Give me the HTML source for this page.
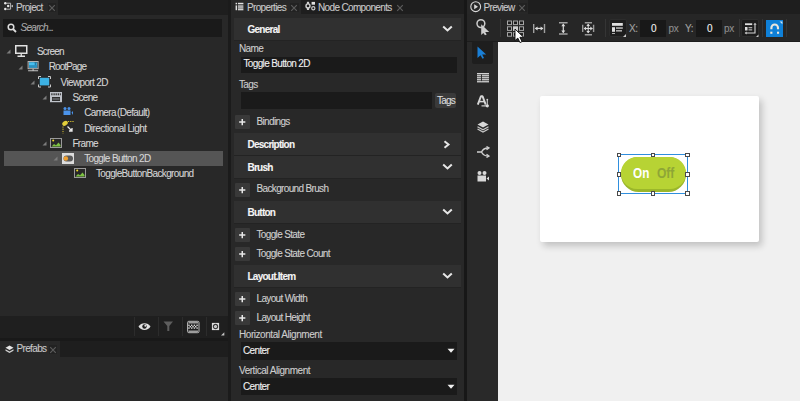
<!DOCTYPE html><html><head><meta charset="utf-8"><style>
html,body{margin:0;padding:0;width:800px;height:401px;overflow:hidden;background:#1e1e1e;position:relative}
body>div,body>svg{position:absolute}
.t{white-space:pre;font-family:"Liberation Sans",sans-serif;-webkit-text-stroke:0.1px currentColor}
</style></head><body>
<div style="left:0px;top:0px;width:58px;height:15px;background:#282828;"></div>
<div style="left:0px;top:15px;width:228px;height:301px;background:#282828;"></div>
<svg style="position:absolute;left:0px;top:0px;" width="16" height="14" viewBox="0 0 16 14"><g fill="#e6e6e6"><circle cx="5.3" cy="3.2" r="1.25"/><circle cx="8.2" cy="6.1" r="1.25"/><circle cx="5.3" cy="9.1" r="1.25"/></g><path d="M6.6 3.2H10.6V9.2H6.6" stroke="#c6c6c6" stroke-width="0.9" fill="none"/><path d="M11 6.1L12.9 4.8V7.4z" fill="#cfcfcf"/></svg>
<div class="t" style="left:16px;top:2px;font-size:10px;line-height:11px;color:#c9c9c9;font-weight:normal;letter-spacing:-0.65px;">Project</div>
<div style="left:48px;top:3px;width:8px;height:9px;background:#222222;"></div>
<svg style="position:absolute;left:48px;top:3.5px;" width="8" height="8" viewBox="0 0 8 8"><path d="M1.2 1.2L6.8 6.8M6.8 1.2L1.2 6.8" stroke="#5c5c5c" stroke-width="1.2"/></svg>
<div style="left:3px;top:19px;width:219px;height:18px;background:#1a1a1a;"></div>
<svg style="position:absolute;left:7px;top:23px;" width="10" height="10" viewBox="0 0 10 10"><circle cx="4" cy="4" r="2.8" stroke="#ddd" stroke-width="1.5" fill="none"/><path d="M6 6l3 3" stroke="#ddd" stroke-width="1.8"/></svg>
<div class="t" style="left:20.5px;top:22px;font-size:10px;line-height:11px;color:#a9a9a9;font-weight:normal;letter-spacing:-0.7px;font-style:italic;">Search<span style="letter-spacing:-1.1px">...</span></div>
<div style="left:4px;top:151px;width:219px;height:14.5px;background:#555555;"></div>
<svg style="position:absolute;left:6.199999999999999px;top:49.25px;" width="5" height="5" viewBox="0 0 5 5"><path d="M0.5 4.5H4.5V0.5Z" fill="#7c7c7c"/></svg>
<svg style="position:absolute;left:15.0px;top:45.25px;" width="13" height="12" viewBox="0 0 13 12"><rect x="0.75" y="0.75" width="11" height="7.5" fill="none" stroke="#e2e2e2" stroke-width="1.5"/><path d="M6.25 8.5v2.5M2.5 11.25h7.5" stroke="#e2e2e2" stroke-width="1.3"/></svg>
<div class="t" style="left:37.0px;top:46px;font-size:10px;line-height:11px;color:#d4d4d4;font-weight:normal;letter-spacing:-0.8px;">Screen</div>
<svg style="position:absolute;left:18.0px;top:64.5px;" width="5" height="5" viewBox="0 0 5 5"><path d="M0.5 4.5H4.5V0.5Z" fill="#7c7c7c"/></svg>
<svg style="position:absolute;left:27px;top:60px;" width="13" height="12" viewBox="0 0 13 12"><rect x="1.1" y="1.5" width="10" height="7.2" fill="#3a3a3a" stroke="#b4b4b4" stroke-width="1"/><rect x="2" y="2.4" width="8.2" height="5.4" fill="#35a9dc"/><rect x="2" y="2.4" width="5.5" height="2.6" fill="#48c0f0"/><rect x="7.9" y="2.4" width="0.8" height="2.8" fill="#1d6e96"/><rect x="2" y="5.7" width="8.2" height="0.7" fill="#1d6e96"/><path d="M6.1 8.7v1.6M1.1 10.8h10" stroke="#c4c4c4" stroke-width="1.1"/></svg>
<div class="t" style="left:48.8px;top:61px;font-size:10px;line-height:11px;color:#d4d4d4;font-weight:normal;letter-spacing:-0.9px;">RootPage</div>
<svg style="position:absolute;left:29.799999999999997px;top:79.75px;" width="5" height="5" viewBox="0 0 5 5"><path d="M0.5 4.5H4.5V0.5Z" fill="#7c7c7c"/></svg>
<svg style="position:absolute;left:38.1px;top:76.25px;" width="13" height="12" viewBox="0 0 13 12"><rect x="1.8" y="1.8" width="9.4" height="7.6" fill="#3cb1e3"/><path d="M0.5 3V0.5H3M10 0.5h2.5V3M12.5 8.5V11H10M3 11H0.5V8.5" stroke="#c9c9c9" stroke-width="1" fill="none"/></svg>
<div class="t" style="left:60.6px;top:77px;font-size:10px;line-height:11px;color:#d4d4d4;font-weight:normal;letter-spacing:-0.65px;">Viewport 2D</div>
<svg style="position:absolute;left:41.60000000000001px;top:95.0px;" width="5" height="5" viewBox="0 0 5 5"><path d="M0.5 4.5H4.5V0.5Z" fill="#7c7c7c"/></svg>
<svg style="position:absolute;left:50px;top:92px;" width="13" height="12" viewBox="0 0 13 12"><rect x="0" y="0" width="12" height="10.2" fill="#bfc3ca"/><g fill="#2a2a2a"><rect x="1.3" y="1.3" width="1.2" height="2.2"/><rect x="3.5" y="1.3" width="1.2" height="2.2"/><rect x="5.6" y="1.3" width="1.2" height="2.2"/><rect x="7.7" y="1.3" width="1.2" height="2.2"/><rect x="9.8" y="1.3" width="1" height="2.2"/></g><rect x="1" y="3.5" width="10" height="0.8" fill="#bfc3ca"/><rect x="2" y="5" width="8" height="4" fill="#2e2e2e"/><rect x="2.5" y="6.4" width="7" height="1.2" fill="#7a7d82"/></svg>
<div class="t" style="left:72.4px;top:92px;font-size:10px;line-height:11px;color:#d4d4d4;font-weight:normal;letter-spacing:-0.65px;">Scene</div>
<svg style="position:absolute;left:62.7px;top:107.25px;" width="12" height="10" viewBox="0 0 12 10"><g fill="#4b93ea"><circle cx="2" cy="1.6" r="1.5"/><circle cx="6" cy="1.6" r="1.5"/><rect x="0.5" y="3.5" width="7" height="4.5"/><path d="M8.5 5.5L10 4v4z"/></g></svg>
<div class="t" style="left:84.2px;top:107px;font-size:10px;line-height:11px;color:#d4d4d4;font-weight:normal;letter-spacing:-0.65px;">Camera<span style="letter-spacing:-1.6px"> </span>(Default)</div>
<svg style="position:absolute;left:62.2px;top:120.3px;" width="13" height="14" viewBox="0 0 13 14"><ellipse cx="3" cy="3.3" rx="3" ry="2.2" transform="rotate(-35 3 3.3)" fill="#e3cf3a"/><path d="M6 1.5h6M1 6.5v7" stroke="#d8c030" stroke-width="1" stroke-dasharray="1.2 1"/><path d="M5.5 6.5l4.5 4.5M10 8v3h-3" stroke="#e8e8e8" stroke-width="1.3" fill="none"/></svg>
<div class="t" style="left:84.2px;top:123px;font-size:10px;line-height:11px;color:#d4d4d4;font-weight:normal;letter-spacing:-0.55px;">Directional Light</div>
<svg style="position:absolute;left:41.60000000000001px;top:140.75px;" width="5" height="5" viewBox="0 0 5 5"><path d="M0.5 4.5H4.5V0.5Z" fill="#7c7c7c"/></svg>
<svg style="position:absolute;left:50.400000000000006px;top:137.75px;" width="13" height="11" viewBox="0 0 13 11"><rect x="0.5" y="0.5" width="11" height="9" fill="none" stroke="#9a9a9a" stroke-width="1"/><circle cx="3.2" cy="2.6" r="1" fill="#f2df2a"/><path d="M1.5 8.5L4 6l2 1.3L8.5 4.5L10.5 7v1.5z" fill="#7dc142"/></svg>
<div class="t" style="left:72.4px;top:138px;font-size:10px;line-height:11px;color:#d4d4d4;font-weight:normal;letter-spacing:-0.65px;">Frame</div>
<svg style="position:absolute;left:53.400000000000006px;top:156.0px;" width="5" height="5" viewBox="0 0 5 5"><path d="M0.5 4.5H4.5V0.5Z" fill="#7c7c7c"/></svg>
<svg style="position:absolute;left:62.2px;top:152.5px;" width="12" height="12" viewBox="0 0 12 12"><rect x="0" y="0" width="12" height="11" fill="#dcdcdc"/><rect x="1.5" y="2.5" width="9.5" height="6" rx="3" fill="#5a5a5a"/><circle cx="3.8" cy="5.5" r="2.3" fill="#f0a030"/></svg>
<div class="t" style="left:84.2px;top:153px;font-size:10px;line-height:11px;color:#d4d4d4;font-weight:normal;letter-spacing:-0.65px;">Toggle Button 2D</div>
<svg style="position:absolute;left:74.0px;top:168.25px;" width="13" height="11" viewBox="0 0 13 11"><rect x="0.5" y="0.5" width="11" height="9" fill="none" stroke="#9a9a9a" stroke-width="1"/><circle cx="3.2" cy="2.6" r="1" fill="#f2df2a"/><path d="M1.5 8.5L4 6l2 1.3L8.5 4.5L10.5 7v1.5z" fill="#7dc142"/></svg>
<div class="t" style="left:96.0px;top:168px;font-size:10px;line-height:11px;color:#d4d4d4;font-weight:normal;letter-spacing:-0.65px;">ToggleButtonBackground</div>
<div style="left:0px;top:316px;width:227px;height:21.5px;background:#1f1f1f;"></div>
<div style="left:0px;top:337.5px;width:228px;height:3.5px;background:#191919;"></div>
<div style="left:134px;top:317px;width:1px;height:19px;background:#2c2c2c;"></div>
<div style="left:158px;top:317px;width:1px;height:19px;background:#2c2c2c;"></div>
<div style="left:182px;top:317px;width:1px;height:19px;background:#2c2c2c;"></div>
<div style="left:206px;top:317px;width:1px;height:19px;background:#2c2c2c;"></div>
<svg style="position:absolute;left:138px;top:322px;" width="13" height="9" viewBox="0 0 13 9"><path d="M0.5 4.5C3 0 10 0 12.5 4.5C10 9 3 9 0.5 4.5z" fill="#e0e0e0"/><circle cx="6.5" cy="4.5" r="2.2" fill="#1d1d1d"/><circle cx="7.3" cy="3.8" r="1" fill="#e0e0e0"/></svg>
<svg style="position:absolute;left:163px;top:321px;" width="11" height="10" viewBox="0 0 11 10"><path d="M0.5 0.5h9.5L6.3 5v5H4.3V5z" fill="#5e5e5e"/></svg>
<svg style="position:absolute;left:186px;top:320px;" width="14" height="14" viewBox="0 0 14 14"><rect x="1.6" y="1.3" width="11.4" height="11.4" rx="1.2" fill="#1d1d1d" stroke="#bdbdbd" stroke-width="1"/><rect x="2.5" y="2.2" width="9.6" height="1.2" fill="#bdbdbd"/><rect x="2.5" y="10.6" width="9.6" height="1.2" fill="#bdbdbd"/><g fill="#d8d8d8"><rect x="2.3" y="4.6" width="1.4" height="1.4"/><rect x="5" y="4.6" width="1.4" height="1.4"/><rect x="7.7" y="4.6" width="1.4" height="1.4"/><rect x="10.4" y="4.6" width="1.4" height="1.4"/><rect x="3.6" y="6" width="1.4" height="1.4"/><rect x="6.3" y="6" width="1.4" height="1.4"/><rect x="9" y="6" width="1.4" height="1.4"/><rect x="2.3" y="7.4" width="1.4" height="1.4"/><rect x="5" y="7.4" width="1.4" height="1.4"/><rect x="7.7" y="7.4" width="1.4" height="1.4"/><rect x="10.4" y="7.4" width="1.4" height="1.4"/></g></svg>
<svg style="position:absolute;left:211px;top:322px;" width="9" height="9" viewBox="0 0 9 9"><rect x="0.9" y="0.9" width="7.2" height="7.2" fill="#dedede"/><circle cx="4.5" cy="4.5" r="2.1" fill="none" stroke="#3a3a3a" stroke-width="1.2"/><circle cx="4.5" cy="4.5" r="0.7" fill="#bbb"/></svg>
<svg style="position:absolute;left:221px;top:332px;" width="4" height="4" viewBox="0 0 4 4"><path d="M0 3.5H3.3V0.2z" fill="#c4c4c4"/></svg>
<div style="left:0px;top:341px;width:60px;height:16px;background:#282828;"></div>
<div style="left:0px;top:357px;width:228px;height:44px;background:#282828;"></div>
<svg style="position:absolute;left:5px;top:344.8px;" width="9" height="9" viewBox="0 0 9 9"><path d="M4.5 0.5L8.5 2.8L4.5 5L0.5 2.8z" fill="#e6e6e6"/><path d="M0.5 4.3L4.5 6.5L8.5 4.3V5.8L4.5 8L0.5 5.8z" fill="#d0d0d0"/></svg>
<div class="t" style="left:16.5px;top:343px;font-size:10px;line-height:11px;color:#c9c9c9;font-weight:normal;letter-spacing:-0.65px;">Prefabs</div>
<div style="left:49px;top:345px;width:8px;height:9px;background:#222222;"></div>
<svg style="position:absolute;left:49px;top:345.5px;" width="8" height="8" viewBox="0 0 8 8"><path d="M1.2 1.2L6.8 6.8M6.8 1.2L1.2 6.8" stroke="#5c5c5c" stroke-width="1.2"/></svg>
<div style="left:228px;top:0px;width:3px;height:401px;background:#1b1b1b;"></div>
<div style="left:231px;top:0px;width:70px;height:14px;background:#282828;"></div>
<div style="left:231px;top:14px;width:233px;height:387px;background:#282828;"></div>
<svg style="position:absolute;left:235px;top:2px;" width="9" height="9" viewBox="0 0 9 9"><g fill="#e0e0e0"><rect x="0.6" y="0.8" width="1.5" height="1.5"/><rect x="0.6" y="3.4" width="1.5" height="4.8"/><rect x="3" y="0.8" width="5.4" height="1.5"/><rect x="3" y="3.4" width="5.4" height="1.3"/><rect x="3" y="5.3" width="5.4" height="1.3"/><rect x="3" y="7.1" width="5.4" height="1.2"/></g></svg>
<div class="t" style="left:247px;top:2px;font-size:10px;line-height:11px;color:#c9c9c9;font-weight:normal;letter-spacing:-0.65px;">Properties</div>
<div style="left:290px;top:3px;width:8.5px;height:9px;background:#222222;"></div>
<svg style="position:absolute;left:290.2px;top:3.5px;" width="8" height="8" viewBox="0 0 8 8"><path d="M1.2 1.2L6.8 6.8M6.8 1.2L1.2 6.8" stroke="#5c5c5c" stroke-width="1.2"/></svg>
<svg style="position:absolute;left:300px;top:0px;" width="20" height="14" viewBox="0 0 20 14"><circle cx="8" cy="5.9" r="2" fill="none" stroke="#d0d0d0" stroke-width="1.4"/><rect x="6.9" y="1.8" width="2.2" height="2.3" fill="#d0d0d0"/><rect x="6.9" y="7.6" width="2.2" height="2.4" fill="#d0d0d0"/><rect x="11.6" y="1.9" width="3.4" height="2.8" fill="#e0e0e0"/><circle cx="13.3" cy="8.2" r="1.6" fill="none" stroke="#c8c8c8" stroke-width="1.2"/></svg>
<div class="t" style="left:318px;top:2px;font-size:10px;line-height:11px;color:#c9c9c9;font-weight:normal;letter-spacing:-0.65px;">Node Components</div>
<svg style="position:absolute;left:396px;top:3.5px;" width="8" height="8" viewBox="0 0 8 8"><path d="M1.2 1.2L6.8 6.8M6.8 1.2L1.2 6.8" stroke="#5c5c5c" stroke-width="1.2"/></svg>
<div style="left:234px;top:18px;width:227px;height:22px;background:#303030;"></div>
<div style="left:234px;top:40px;width:227px;height:1px;background:#232323;"></div>
<div class="t" style="left:247.5px;top:24px;font-size:10px;line-height:11px;color:#f4f4f4;font-weight:bold;letter-spacing:-0.75px;">General</div>
<svg style="position:absolute;left:442px;top:25px;" width="11" height="8" viewBox="0 0 11 8"><path d="M1.2 1.5L5.5 5.5L9.8 1.5" stroke="#e6e6e6" stroke-width="2" fill="none"/></svg>
<div class="t" style="left:239px;top:43px;font-size:10px;line-height:11px;color:#cdcdcd;font-weight:normal;letter-spacing:-0.65px;">Name</div>
<div style="left:241px;top:57px;width:216px;height:16px;background:#1a1a1a;"></div>
<div class="t" style="left:243.5px;top:58px;font-size:10px;line-height:11px;color:#f0f0f0;font-weight:normal;letter-spacing:-0.65px;">Toggle Button 2D</div>
<div class="t" style="left:239px;top:79px;font-size:10px;line-height:11px;color:#cdcdcd;font-weight:normal;letter-spacing:-0.65px;">Tags</div>
<div style="left:241px;top:92px;width:191px;height:16.5px;background:#1a1a1a;"></div>
<div style="left:435px;top:93px;width:21px;height:15px;background:#3a3a3a;border-radius:2px"></div>
<div class="t" style="left:437px;top:95px;font-size:10px;line-height:11px;color:#dcdcdc;font-weight:normal;letter-spacing:-0.8px;">Tags</div>
<div style="left:235px;top:115px;width:14.5px;height:14px;background:#393939;border-radius:1px"></div>
<svg style="position:absolute;left:235px;top:115px;" width="14" height="14" viewBox="0 0 14 14"><path d="M7.25 4v6.2M4.15 7.1h6.2" stroke="#e8e8e8" stroke-width="1.5"/></svg>
<div class="t" style="left:256.5px;top:116px;font-size:10px;line-height:11px;color:#cfcfcf;font-weight:normal;letter-spacing:-0.65px;">Bindings</div>
<div style="left:234px;top:133px;width:227px;height:22px;background:#303030;"></div>
<div style="left:234px;top:155px;width:227px;height:1px;background:#232323;"></div>
<div class="t" style="left:247.5px;top:139px;font-size:10px;line-height:11px;color:#f4f4f4;font-weight:bold;letter-spacing:-0.75px;">Description</div>
<svg style="position:absolute;left:443px;top:140px;" width="8" height="10" viewBox="0 0 8 10"><path d="M1.5 1.2L5.5 4.5L1.5 7.8" stroke="#e6e6e6" stroke-width="2" fill="none"/></svg>
<div style="left:234px;top:156px;width:227px;height:22px;background:#303030;"></div>
<div style="left:234px;top:178px;width:227px;height:1px;background:#232323;"></div>
<div class="t" style="left:247.5px;top:162px;font-size:10px;line-height:11px;color:#f4f4f4;font-weight:bold;letter-spacing:-0.75px;">Brush</div>
<svg style="position:absolute;left:442px;top:163px;" width="11" height="8" viewBox="0 0 11 8"><path d="M1.2 1.5L5.5 5.5L9.8 1.5" stroke="#e6e6e6" stroke-width="2" fill="none"/></svg>
<div style="left:235px;top:182.5px;width:14.5px;height:14.0px;background:#393939;border-radius:1px"></div>
<svg style="position:absolute;left:235px;top:182.5px;" width="14" height="14" viewBox="0 0 14 14"><path d="M7.25 4v6.2M4.15 7.1h6.2" stroke="#e8e8e8" stroke-width="1.5"/></svg>
<div class="t" style="left:256.5px;top:183px;font-size:10px;line-height:11px;color:#cfcfcf;font-weight:normal;letter-spacing:-0.65px;">Background Brush</div>
<div style="left:234px;top:201px;width:227px;height:22px;background:#303030;"></div>
<div style="left:234px;top:223px;width:227px;height:1px;background:#232323;"></div>
<div class="t" style="left:247.5px;top:207px;font-size:10px;line-height:11px;color:#f4f4f4;font-weight:bold;letter-spacing:-0.75px;">Button</div>
<svg style="position:absolute;left:442px;top:208px;" width="11" height="8" viewBox="0 0 11 8"><path d="M1.2 1.5L5.5 5.5L9.8 1.5" stroke="#e6e6e6" stroke-width="2" fill="none"/></svg>
<div style="left:235px;top:227.5px;width:14.5px;height:14.0px;background:#393939;border-radius:1px"></div>
<svg style="position:absolute;left:235px;top:227.5px;" width="14" height="14" viewBox="0 0 14 14"><path d="M7.25 4v6.2M4.15 7.1h6.2" stroke="#e8e8e8" stroke-width="1.5"/></svg>
<div class="t" style="left:256.5px;top:229px;font-size:10px;line-height:11px;color:#cfcfcf;font-weight:normal;letter-spacing:-0.65px;">Toggle State</div>
<div style="left:235px;top:246.8px;width:14.5px;height:14.0px;background:#393939;border-radius:1px"></div>
<svg style="position:absolute;left:235px;top:246.8px;" width="14" height="14" viewBox="0 0 14 14"><path d="M7.25 4v6.2M4.15 7.1h6.2" stroke="#e8e8e8" stroke-width="1.5"/></svg>
<div class="t" style="left:256.5px;top:248px;font-size:10px;line-height:11px;color:#cfcfcf;font-weight:normal;letter-spacing:-0.65px;">Toggle State Count</div>
<div style="left:234px;top:265px;width:227px;height:22px;background:#303030;"></div>
<div style="left:234px;top:287px;width:227px;height:1px;background:#232323;"></div>
<div class="t" style="left:247.5px;top:271px;font-size:10px;line-height:11px;color:#f4f4f4;font-weight:bold;letter-spacing:-0.75px;">Layout.Item</div>
<svg style="position:absolute;left:442px;top:272px;" width="11" height="8" viewBox="0 0 11 8"><path d="M1.2 1.5L5.5 5.5L9.8 1.5" stroke="#e6e6e6" stroke-width="2" fill="none"/></svg>
<div style="left:235px;top:292px;width:14.5px;height:14px;background:#393939;border-radius:1px"></div>
<svg style="position:absolute;left:235px;top:292px;" width="14" height="14" viewBox="0 0 14 14"><path d="M7.25 4v6.2M4.15 7.1h6.2" stroke="#e8e8e8" stroke-width="1.5"/></svg>
<div class="t" style="left:256.5px;top:293px;font-size:10px;line-height:11px;color:#cfcfcf;font-weight:normal;letter-spacing:-0.65px;">Layout Width</div>
<div style="left:235px;top:311px;width:14.5px;height:14px;background:#393939;border-radius:1px"></div>
<svg style="position:absolute;left:235px;top:311px;" width="14" height="14" viewBox="0 0 14 14"><path d="M7.25 4v6.2M4.15 7.1h6.2" stroke="#e8e8e8" stroke-width="1.5"/></svg>
<div class="t" style="left:256.5px;top:312px;font-size:10px;line-height:11px;color:#cfcfcf;font-weight:normal;letter-spacing:-0.65px;">Layout Height</div>
<div class="t" style="left:239px;top:329px;font-size:10px;line-height:11px;color:#cdcdcd;font-weight:normal;letter-spacing:-0.45px;">Horizontal Alignment</div>
<div style="left:241px;top:342px;width:216px;height:17.5px;background:#1a1a1a;"></div>
<div class="t" style="left:243px;top:345px;font-size:10px;line-height:11px;color:#f0f0f0;font-weight:normal;letter-spacing:-0.65px;">Center</div>
<svg style="position:absolute;left:447px;top:348px;" width="8" height="6" viewBox="0 0 8 6"><path d="M0.5 0.8H7.5L4 4.8z" fill="#f0f0f0"/></svg>
<div class="t" style="left:239px;top:365px;font-size:10px;line-height:11px;color:#cdcdcd;font-weight:normal;letter-spacing:-0.47px;">Vertical Alignment</div>
<div style="left:241px;top:378px;width:216px;height:17px;background:#1a1a1a;"></div>
<div class="t" style="left:243px;top:381px;font-size:10px;line-height:11px;color:#f0f0f0;font-weight:normal;letter-spacing:-0.65px;">Center</div>
<svg style="position:absolute;left:447px;top:384px;" width="8" height="6" viewBox="0 0 8 6"><path d="M0.5 0.8H7.5L4 4.8z" fill="#f0f0f0"/></svg>
<div style="left:464px;top:0px;width:3px;height:401px;background:#171717;"></div>
<div style="left:467px;top:0px;width:61px;height:14px;background:#272727;"></div>
<svg style="position:absolute;left:470px;top:1px;" width="12" height="12" viewBox="0 0 12 12"><circle cx="5.7" cy="5.7" r="4.9" fill="none" stroke="#d8d8d8" stroke-width="1.1"/><path d="M4.2 3.2L8 5.7L4.2 8.2z" fill="#d8d8d8"/></svg>
<div class="t" style="left:483.5px;top:2px;font-size:10px;line-height:11px;color:#c9c9c9;font-weight:normal;letter-spacing:-0.65px;">Preview</div>
<div style="left:518px;top:3px;width:8.5px;height:9px;background:#222222;"></div>
<svg style="position:absolute;left:518.2px;top:3.5px;" width="8" height="8" viewBox="0 0 8 8"><path d="M1.2 1.2L6.8 6.8M6.8 1.2L1.2 6.8" stroke="#5c5c5c" stroke-width="1.2"/></svg>
<div style="left:467px;top:14px;width:333px;height:27px;background:#262626;"></div>
<div style="left:467px;top:40.5px;width:333px;height:1.5px;background:#1c1c1c;"></div>
<div style="left:467px;top:42px;width:31px;height:359px;background:#292929;"></div>
<div style="left:498px;top:42px;width:302px;height:359px;background:#f0f0f0;"></div>
<div style="left:500px;top:19px;width:1px;height:18px;background:#353535;"></div>
<div style="left:605px;top:19px;width:1px;height:18px;background:#353535;"></div>
<div style="left:738.5px;top:19px;width:1.0px;height:18px;background:#353535;"></div>
<div style="left:762px;top:19px;width:1px;height:18px;background:#353535;"></div>
<div style="left:785.5px;top:19px;width:1.0px;height:18px;background:#353535;"></div>
<svg style="position:absolute;left:470px;top:14px;" width="30" height="26" viewBox="0 0 30 26"><circle cx="10.9" cy="9.6" r="3.9" fill="none" stroke="#cdcdcd" stroke-width="1.5"/><path d="M11.2 10.2V21L13.3 19L15 21.2L16.7 20.4L15.2 18H19.2z" fill="#cdcdcd"/></svg>
<svg style="position:absolute;left:506px;top:20px;" width="20" height="18" viewBox="0 0 20 18"><rect x="1" y="0.5" width="5" height="4.6" fill="#a6a6a6"/><rect x="2" y="1.5" width="3" height="2.6" fill="#1d1d1d"/><rect x="7" y="0.5" width="5" height="4.6" fill="#a6a6a6"/><rect x="8" y="1.5" width="3" height="2.6" fill="#1d1d1d"/><rect x="13" y="0.5" width="5" height="4.6" fill="#a6a6a6"/><rect x="14" y="1.5" width="3" height="2.6" fill="#1d1d1d"/><rect x="1" y="6.3" width="5" height="4.6" fill="#a6a6a6"/><rect x="2" y="7.3" width="3" height="2.6" fill="#1d1d1d"/><rect x="7" y="6.3" width="5" height="4.6" fill="#cfcfcf"/><rect x="13" y="6.3" width="5" height="4.6" fill="#a6a6a6"/><rect x="14" y="7.3" width="3" height="2.6" fill="#1d1d1d"/><rect x="1" y="12.1" width="5" height="4.6" fill="#a6a6a6"/><rect x="2" y="13.1" width="3" height="2.6" fill="#1d1d1d"/><rect x="7" y="12.1" width="5" height="4.6" fill="#a6a6a6"/><rect x="8" y="13.1" width="3" height="2.6" fill="#1d1d1d"/><rect x="13" y="12.1" width="5" height="4.6" fill="#a6a6a6"/><rect x="14" y="13.1" width="3" height="2.6" fill="#1d1d1d"/></svg>
<svg style="position:absolute;left:513px;top:28px;" width="12" height="16" viewBox="0 0 12 16"><path d="M2 1V12.6L4.8 10.1L7 14.6L9 13.6L6.9 9.3H10.6z" fill="#fff" stroke="#0c0c0c" stroke-width="0.9" stroke-linejoin="round"/></svg>
<svg style="position:absolute;left:530px;top:20px;" width="18" height="16" viewBox="0 0 18 16"><path d="M3.7 3.9v9M14.5 3.9v9" stroke="#a0a0a0" stroke-width="1.4"/><path d="M5.5 8.4h7.3" stroke="#dcdcdc" stroke-width="1.2"/><path d="M4.8 8.4l2.8-2v4zM13.4 8.4l-2.8-2v4z" fill="#dcdcdc"/></svg>
<svg style="position:absolute;left:556px;top:20px;" width="14" height="17" viewBox="0 0 14 17"><path d="M3 2.7h8.6M3 14.1h8.6" stroke="#a0a0a0" stroke-width="1.5"/><path d="M7.3 4.5v8" stroke="#dcdcdc" stroke-width="1.2"/><path d="M7.3 3.6l-2 2.7h4zM7.3 13.2l-2-2.7h4z" fill="#dcdcdc"/></svg>
<svg style="position:absolute;left:580px;top:20px;" width="16" height="17" viewBox="0 0 16 17"><path d="M2.7 4.8v7.2M13.6 4.8v7.2M4.8 2.7h7.2M4.8 14.7h7.2" stroke="#9a9a9a" stroke-width="1.4"/><path d="M4 8.5h8.3M8.2 4.2v8.6" stroke="#dcdcdc" stroke-width="1.1"/><path d="M3.6 8.5l2.5-1.9v3.8zM12.8 8.5l-2.5-1.9v3.8zM8.2 3.7l-1.9 2.4h3.8zM8.2 13.3l-1.9-2.4h3.8z" fill="#dcdcdc"/></svg>
<div style="left:608.5px;top:19.2px;width:18.100000000000023px;height:18.099999999999998px;background:#1c1c1c;border:1px solid #2c2c2c;box-sizing:border-box;border-radius:2px"></div>
<svg style="position:absolute;left:606px;top:17px;" width="24" height="22" viewBox="0 0 24 22"><rect x="6" y="6" width="10.8" height="2.8" fill="#dedede"/><rect x="6" y="10.2" width="3" height="4.6" fill="#dedede"/><rect x="10" y="10.2" width="6.8" height="1.7" fill="#a9a9a9"/><rect x="10" y="13" width="6" height="1.6" fill="#a9a9a9"/><rect x="6" y="16" width="3" height="1" fill="#aaa"/><path d="M17 20H20V17z" fill="#c8c8c8"/></svg>
<div class="t" style="left:629px;top:23px;font-size:10px;line-height:11px;color:#a2a2a2;font-weight:normal;letter-spacing:-0.3px;">X:</div>
<div style="left:640px;top:20px;width:26px;height:16.799999999999997px;background:#181818;"></div>
<div class="t" style="left:651px;top:23px;font-size:10px;line-height:11px;color:#f2f2f2;font-weight:normal;letter-spacing:0px;">0</div>
<div class="t" style="left:668.5px;top:23px;font-size:10px;line-height:11px;color:#8e8e8e;font-weight:normal;letter-spacing:-0.3px;">px</div>
<div class="t" style="left:685px;top:23px;font-size:10px;line-height:11px;color:#a2a2a2;font-weight:normal;letter-spacing:-0.3px;">Y:</div>
<div style="left:696px;top:20px;width:26px;height:16.799999999999997px;background:#181818;"></div>
<div class="t" style="left:707px;top:23px;font-size:10px;line-height:11px;color:#f2f2f2;font-weight:normal;letter-spacing:0px;">0</div>
<div class="t" style="left:724px;top:23px;font-size:10px;line-height:11px;color:#8e8e8e;font-weight:normal;letter-spacing:-0.3px;">px</div>
<div style="left:741.4px;top:19.4px;width:17.700000000000045px;height:17.700000000000003px;background:#1c1c1c;border:1px solid #2c2c2c;box-sizing:border-box;border-radius:2px"></div>
<svg style="position:absolute;left:739px;top:17px;" width="22" height="22" viewBox="0 0 22 22"><rect x="6" y="6.3" width="7.2" height="1.8" fill="#dedede"/><rect x="6" y="10" width="2.5" height="3.5" fill="#dedede"/><rect x="9.5" y="10" width="3.7" height="1.3" fill="#a9a9a9"/><rect x="9.5" y="12.2" width="3.7" height="1.3" fill="#a9a9a9"/><path d="M16 7.5V16H7" stroke="#d6d6d6" stroke-width="1.1" fill="none"/><path d="M16 5.8l-1.6 2h3.2zM5.6 16l2-1.6v3.2z" fill="#d6d6d6"/><path d="M17 20H19.5V17.5z" fill="#c8c8c8"/></svg>
<div style="left:765.7px;top:19.7px;width:17.399999999999977px;height:17.400000000000002px;background:#0f80d8;"></div>
<svg style="position:absolute;left:765.7px;top:19.7px;" width="17.4" height="17.4" viewBox="0 0 17.4 17.4"><path d="M5.4 9.3V7.8a3.3 3.3 0 0 1 6.6 0V9.3" stroke="#ebe5dc" stroke-width="2.1" fill="none"/><rect x="4.3" y="11.7" width="2.1" height="2.1" fill="#ebe5dc"/><rect x="11" y="11.7" width="2.1" height="2.1" fill="#ebe5dc"/><path d="M13.6 1.5H16.4V4.3z" fill="#cfe3f5"/></svg>
<div style="left:472px;top:41px;width:21px;height:23px;background:#1e1e1e;border-radius:2px"></div>
<svg style="position:absolute;left:476px;top:45px;" width="12" height="15" viewBox="0 0 12 15"><path d="M1.5 1.5V13L4.5 10.2L6.5 13.8L8 13L6.2 9.5H10.2z" fill="#1a7fd6"/></svg>
<svg style="position:absolute;left:476px;top:72px;" width="14" height="12" viewBox="0 0 14 12"><g fill="#d2d2d2"><rect x="1" y="1" width="12" height="1.4"/><rect x="1" y="3.1" width="12" height="1.3"/><rect x="1" y="5.1" width="12" height="1.3"/><rect x="1" y="7.1" width="12" height="1.3"/><rect x="1" y="9.1" width="12" height="1.3"/></g><rect x="5" y="2.4" width="0.9" height="6.7" fill="#292929"/></svg>
<svg style="position:absolute;left:466px;top:90px;" width="34" height="20" viewBox="0 0 34 20"><path d="M11.8 14.6L14.9 6.3H16.6L19.7 14.6" stroke="#d6d6d6" stroke-width="1.9" fill="none" stroke-linejoin="bevel"/><path d="M13.3 11.6H18.2" stroke="#d6d6d6" stroke-width="1.5"/><path d="M21.3 9.8V15.6M15.5 15.9H21" stroke="#c8c8c8" stroke-width="1.1"/><circle cx="21.3" cy="9.6" r="0.9" fill="#d0d0d0"/><circle cx="21.3" cy="15.8" r="1.6" fill="#dcdcdc"/></svg>
<svg style="position:absolute;left:476px;top:120px;" width="14" height="14" viewBox="0 0 14 14"><path d="M7 1.5L12.5 4.5L7 7.5L1.5 4.5z" fill="#d8d8d8"/><path d="M1.5 6.8L7 9.8L12.5 6.8M1.5 9L7 12L12.5 9" stroke="#c8c8c8" stroke-width="1.2" fill="none"/></svg>
<svg style="position:absolute;left:476px;top:146px;" width="14" height="12" viewBox="0 0 14 12"><path d="M1 6h5M5.5 6C7 3 9 2 12 2M5.5 6C7 9 9 10 12 10" stroke="#d0d0d0" stroke-width="1.4" fill="none"/><path d="M10.5 0.5L13 2L10.5 3.8M10.5 8.2L13 10L10.5 11.5" stroke="#d0d0d0" stroke-width="1.3" fill="none"/></svg>
<svg style="position:absolute;left:476px;top:170px;" width="14" height="13" viewBox="0 0 14 13"><circle cx="3.5" cy="3" r="2" fill="#d8d8d8"/><circle cx="8.5" cy="3" r="2" fill="#d8d8d8"/><rect x="1.5" y="5.5" width="8.5" height="6" fill="#d8d8d8"/><path d="M10.5 8.5L13 6.5v4z" fill="#d8d8d8"/></svg>
<div style="left:540px;top:96px;width:219px;height:146px;background:#ffffff;border-radius:2px;box-shadow:3px 4px 7px rgba(0,0,0,0.2)"></div>
<div style="left:620.5px;top:156.5px;width:65.5px;height:35.25px;background:#9bb72a;border-radius:18px"></div>
<div style="left:620.5px;top:156.5px;width:65.5px;height:32.0px;background:#b7d334;border-radius:18px"></div>
<div class="t" style="left:632.5px;top:165px;font-size:14px;line-height:16px;color:#ffffff;font-weight:bold;letter-spacing:0px;transform:scaleX(0.84);transform-origin:0 0;-webkit-text-stroke:0">On</div>
<div class="t" style="left:656.8px;top:165px;font-size:14px;line-height:16px;color:#8ea636;font-weight:bold;letter-spacing:0px;transform:scaleX(0.86);transform-origin:0 0;-webkit-text-stroke:0">Off</div>
<div style="left:618.3px;top:154.3px;width:69.90000000000009px;height:40.0px;background:transparent;border:1.5px solid #2f8fde;box-sizing:border-box"></div>
<div style="left:616.7px;top:152.7px;width:4.599999999999909px;height:4.600000000000023px;background:#ffffff;border:1px solid #4a4a4a;box-sizing:border-box"></div>
<div style="left:616.7px;top:172.0px;width:4.599999999999909px;height:4.600000000000023px;background:#ffffff;border:1px solid #4a4a4a;box-sizing:border-box"></div>
<div style="left:616.7px;top:191.2px;width:4.599999999999909px;height:4.600000000000023px;background:#ffffff;border:1px solid #4a4a4a;box-sizing:border-box"></div>
<div style="left:650.9000000000001px;top:152.7px;width:4.599999999999909px;height:4.600000000000023px;background:#ffffff;border:1px solid #4a4a4a;box-sizing:border-box"></div>
<div style="left:650.9000000000001px;top:191.2px;width:4.599999999999909px;height:4.600000000000023px;background:#ffffff;border:1px solid #4a4a4a;box-sizing:border-box"></div>
<div style="left:685.2px;top:152.7px;width:4.599999999999909px;height:4.600000000000023px;background:#ffffff;border:1px solid #4a4a4a;box-sizing:border-box"></div>
<div style="left:685.2px;top:172.0px;width:4.599999999999909px;height:4.600000000000023px;background:#ffffff;border:1px solid #4a4a4a;box-sizing:border-box"></div>
<div style="left:685.2px;top:191.2px;width:4.599999999999909px;height:4.600000000000023px;background:#ffffff;border:1px solid #4a4a4a;box-sizing:border-box"></div>
</body></html>
